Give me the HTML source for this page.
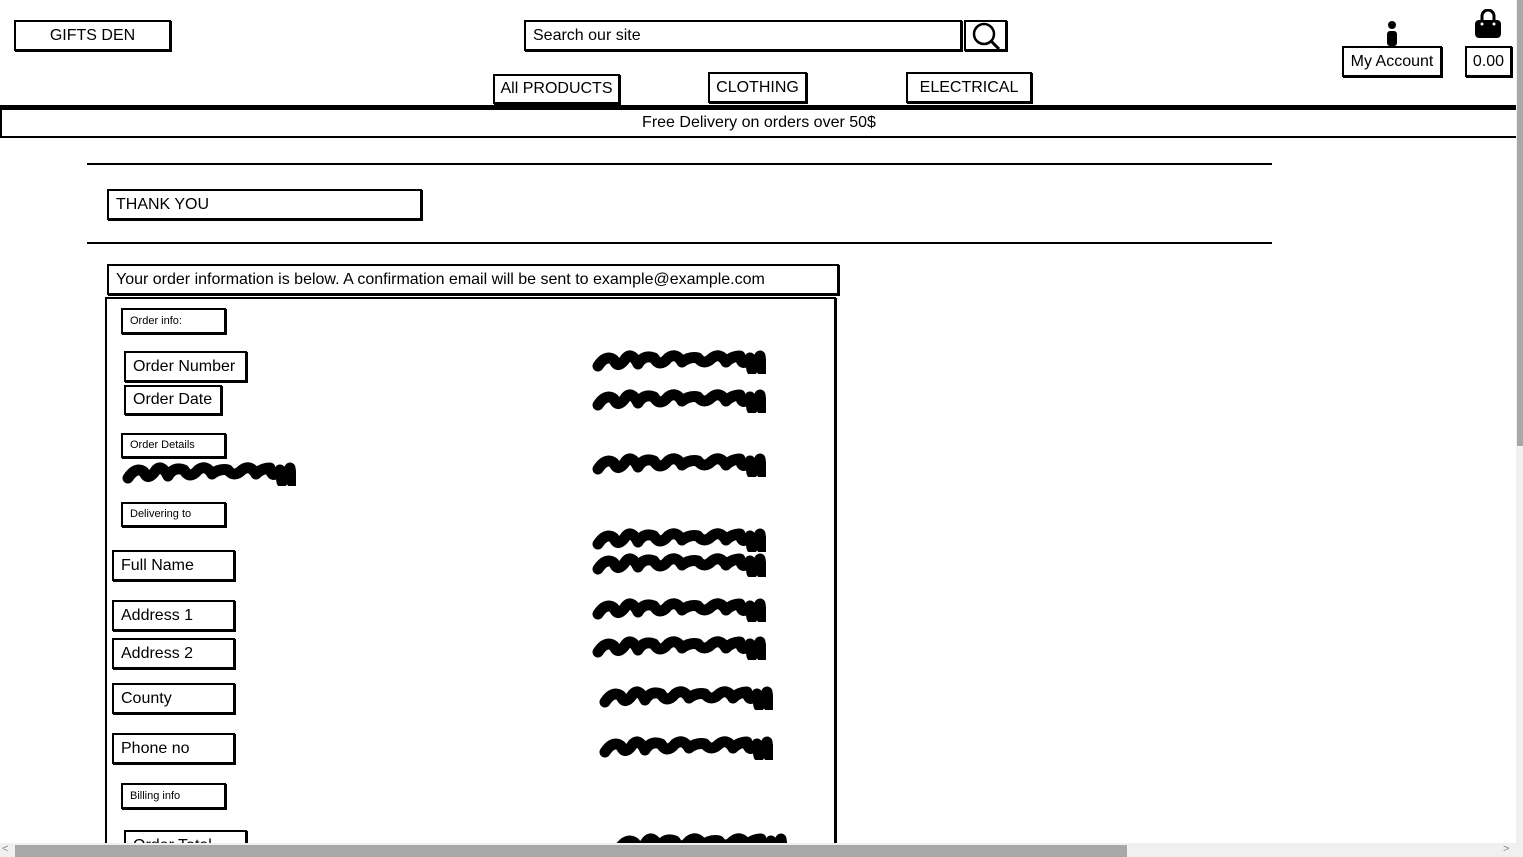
<!DOCTYPE html>
<html style="height:857px;overflow:hidden"><head><meta charset="utf-8"><style>
*{margin:0;padding:0;box-sizing:border-box}
html,body{width:1523px;height:857px;overflow:hidden}
body{background:#fff;position:relative;font-family:"Liberation Sans",sans-serif;color:#000}
.b{position:absolute;border:2px solid #000;box-shadow:1px 1px 0 #000;background:#fff;font-size:16px;line-height:1;display:flex;align-items:center;padding-left:7px;white-space:nowrap}
.c{justify-content:center;padding-left:0}
.s{font-size:11px}
.ln{position:absolute;height:2px;background:#000}
svg.sc{position:absolute;width:174px;height:28px}
.sb{z-index:5}
</style></head><body>
<div class="b c" style="left:14px;top:20px;width:157px;height:31px">GIFTS DEN</div>
<div class="b" style="left:524px;top:20px;width:438px;height:31px">Search our site</div>
<div class="b c" style="left:964px;top:20px;width:43px;height:31px"><svg width="30" height="28" viewBox="0 0 30 28"><circle cx="13" cy="12" r="10" fill="none" stroke="#000" stroke-width="2.5"/><path d="M20 19 L28 27" stroke="#000" stroke-width="3"/></svg></div>
<div class="b c" style="left:493px;top:74px;width:127px;height:30px">All PRODUCTS</div>
<div class="b c" style="left:708px;top:72px;width:99px;height:31px">CLOTHING</div>
<div class="b c" style="left:906px;top:72px;width:126px;height:31px">ELECTRICAL</div>
<svg style="position:absolute;left:1384px;top:20px" width="16" height="26" viewBox="0 0 16 26"><circle cx="8" cy="5" r="4"/><rect x="3" y="11" width="10" height="15" rx="3"/></svg>
<div class="b c" style="left:1342px;top:46px;width:100px;height:31px">My Account</div>
<svg style="position:absolute;left:1474px;top:9px" width="28" height="29" viewBox="0 0 28 29"><path d="M8 12 V7 a6 6 0 0 1 12 0 V12" fill="none" stroke="#000" stroke-width="3"/><rect x="1" y="11" width="26" height="18" rx="4"/><circle cx="8" cy="15" r="1.5" fill="#fff"/><circle cx="20" cy="15" r="1.5" fill="#fff"/></svg>
<div class="b c" style="left:1465px;top:46px;width:47px;height:31px">0.00</div>
<div class="ln" style="left:0;top:105px;width:1516px;height:3px"></div>
<div class="b c" style="left:0;top:108px;width:1518px;height:30px;box-shadow:none">Free Delivery on orders over 50$</div>
<div class="ln" style="left:87px;top:163px;width:1185px"></div>
<div class="b" style="left:107px;top:189px;width:315px;height:31px">THANK YOU</div>
<div class="ln" style="left:87px;top:242px;width:1185px"></div>
<div class="b" style="left:107px;top:264px;width:732px;height:31px">Your order information is below. A confirmation email will be sent to example@example.com</div>
<div style="position:absolute;left:105px;top:297px;width:731px;height:560px;border:2px solid #000;border-bottom:none;box-shadow:1px 1px 0 #000"></div>
<div class="b s" style="left:121px;top:308px;width:105px;height:26px">Order info:</div>
<div class="b" style="left:124px;top:351px;width:123px;height:31px">Order Number</div>
<div class="b" style="left:124px;top:385px;width:98px;height:30px">Order Date</div>
<div class="b s" style="left:121px;top:433px;width:105px;height:25px">Order Details</div>
<div class="b s" style="left:121px;top:502px;width:105px;height:25px">Delivering to</div>
<div class="b" style="left:112px;top:550px;width:123px;height:31px">Full Name</div>
<div class="b" style="left:112px;top:600px;width:123px;height:31px">Address 1</div>
<div class="b" style="left:112px;top:638px;width:123px;height:31px">Address 2</div>
<div class="b" style="left:112px;top:683px;width:123px;height:31px">County</div>
<div class="b" style="left:112px;top:733px;width:123px;height:31px">Phone no</div>
<div class="b s" style="left:121px;top:783px;width:105px;height:26px">Billing info</div>
<div class="b" style="left:124px;top:830px;width:123px;height:31px">Order Total</div>
<svg class="sc" style="left:122px;top:458px" viewBox="0 0 174 28"><path d="M6 20 Q14 8 22 14 Q26 24 34 12 Q40 6 46 18 Q52 8 62 12 Q68 22 76 12 Q84 6 90 16 Q98 10 106 12 Q112 20 120 12 Q128 6 134 16 Q140 10 148 10 Q150 22 158 12 L160 24 L168 10 L170 24" fill="none" stroke="#000" stroke-width="11" stroke-linecap="round" stroke-linejoin="round"/></svg>
<svg class="sc" style="left:592px;top:346px" viewBox="0 0 174 28"><path d="M6 20 Q14 8 22 14 Q26 24 34 12 Q40 6 46 18 Q52 8 62 12 Q68 22 76 12 Q84 6 90 16 Q98 10 106 12 Q112 20 120 12 Q128 6 134 16 Q140 10 148 10 Q150 22 158 12 L160 24 L168 10 L170 24" fill="none" stroke="#000" stroke-width="11" stroke-linecap="round" stroke-linejoin="round"/></svg>
<svg class="sc" style="left:592px;top:385px" viewBox="0 0 174 28"><path d="M6 20 Q14 8 22 14 Q26 24 34 12 Q40 6 46 18 Q52 8 62 12 Q68 22 76 12 Q84 6 90 16 Q98 10 106 12 Q112 20 120 12 Q128 6 134 16 Q140 10 148 10 Q150 22 158 12 L160 24 L168 10 L170 24" fill="none" stroke="#000" stroke-width="11" stroke-linecap="round" stroke-linejoin="round"/></svg>
<svg class="sc" style="left:592px;top:449px" viewBox="0 0 174 28"><path d="M6 20 Q14 8 22 14 Q26 24 34 12 Q40 6 46 18 Q52 8 62 12 Q68 22 76 12 Q84 6 90 16 Q98 10 106 12 Q112 20 120 12 Q128 6 134 16 Q140 10 148 10 Q150 22 158 12 L160 24 L168 10 L170 24" fill="none" stroke="#000" stroke-width="11" stroke-linecap="round" stroke-linejoin="round"/></svg>
<svg class="sc" style="left:592px;top:524px" viewBox="0 0 174 28"><path d="M6 20 Q14 8 22 14 Q26 24 34 12 Q40 6 46 18 Q52 8 62 12 Q68 22 76 12 Q84 6 90 16 Q98 10 106 12 Q112 20 120 12 Q128 6 134 16 Q140 10 148 10 Q150 22 158 12 L160 24 L168 10 L170 24" fill="none" stroke="#000" stroke-width="11" stroke-linecap="round" stroke-linejoin="round"/></svg>
<svg class="sc" style="left:592px;top:549px" viewBox="0 0 174 28"><path d="M6 20 Q14 8 22 14 Q26 24 34 12 Q40 6 46 18 Q52 8 62 12 Q68 22 76 12 Q84 6 90 16 Q98 10 106 12 Q112 20 120 12 Q128 6 134 16 Q140 10 148 10 Q150 22 158 12 L160 24 L168 10 L170 24" fill="none" stroke="#000" stroke-width="11" stroke-linecap="round" stroke-linejoin="round"/></svg>
<svg class="sc" style="left:592px;top:594px" viewBox="0 0 174 28"><path d="M6 20 Q14 8 22 14 Q26 24 34 12 Q40 6 46 18 Q52 8 62 12 Q68 22 76 12 Q84 6 90 16 Q98 10 106 12 Q112 20 120 12 Q128 6 134 16 Q140 10 148 10 Q150 22 158 12 L160 24 L168 10 L170 24" fill="none" stroke="#000" stroke-width="11" stroke-linecap="round" stroke-linejoin="round"/></svg>
<svg class="sc" style="left:592px;top:632px" viewBox="0 0 174 28"><path d="M6 20 Q14 8 22 14 Q26 24 34 12 Q40 6 46 18 Q52 8 62 12 Q68 22 76 12 Q84 6 90 16 Q98 10 106 12 Q112 20 120 12 Q128 6 134 16 Q140 10 148 10 Q150 22 158 12 L160 24 L168 10 L170 24" fill="none" stroke="#000" stroke-width="11" stroke-linecap="round" stroke-linejoin="round"/></svg>
<svg class="sc" style="left:599px;top:682px" viewBox="0 0 174 28"><path d="M6 20 Q14 8 22 14 Q26 24 34 12 Q40 6 46 18 Q52 8 62 12 Q68 22 76 12 Q84 6 90 16 Q98 10 106 12 Q112 20 120 12 Q128 6 134 16 Q140 10 148 10 Q150 22 158 12 L160 24 L168 10 L170 24" fill="none" stroke="#000" stroke-width="11" stroke-linecap="round" stroke-linejoin="round"/></svg>
<svg class="sc" style="left:599px;top:732px" viewBox="0 0 174 28"><path d="M6 20 Q14 8 22 14 Q26 24 34 12 Q40 6 46 18 Q52 8 62 12 Q68 22 76 12 Q84 6 90 16 Q98 10 106 12 Q112 20 120 12 Q128 6 134 16 Q140 10 148 10 Q150 22 158 12 L160 24 L168 10 L170 24" fill="none" stroke="#000" stroke-width="11" stroke-linecap="round" stroke-linejoin="round"/></svg>
<svg class="sc" style="left:613px;top:829px" viewBox="0 0 174 28"><path d="M6 20 Q14 8 22 14 Q26 24 34 12 Q40 6 46 18 Q52 8 62 12 Q68 22 76 12 Q84 6 90 16 Q98 10 106 12 Q112 20 120 12 Q128 6 134 16 Q140 10 148 10 Q150 22 158 12 L160 24 L168 10 L170 24" fill="none" stroke="#000" stroke-width="11" stroke-linecap="round" stroke-linejoin="round"/></svg>
<div class="sb" style="position:absolute;left:1516px;top:0;width:7px;height:843px;background:#f0f0f0"></div>
<div class="sb" style="position:absolute;left:1517px;top:0;width:6px;height:446px;background:#a8a8a8"></div>
<div class="sb" style="position:absolute;left:0;top:843px;width:1523px;height:14px;background:#f0f0f0"></div>
<div class="sb" style="position:absolute;left:15px;top:845px;width:1112px;height:12px;background:#a8a8a8"></div>
<div class="sb" style="position:absolute;left:2px;top:843px;font-size:11px;color:#888">&lt;</div>
<div class="sb" style="position:absolute;left:1503px;top:843px;font-size:11px;color:#888">&gt;</div>
</body></html>
